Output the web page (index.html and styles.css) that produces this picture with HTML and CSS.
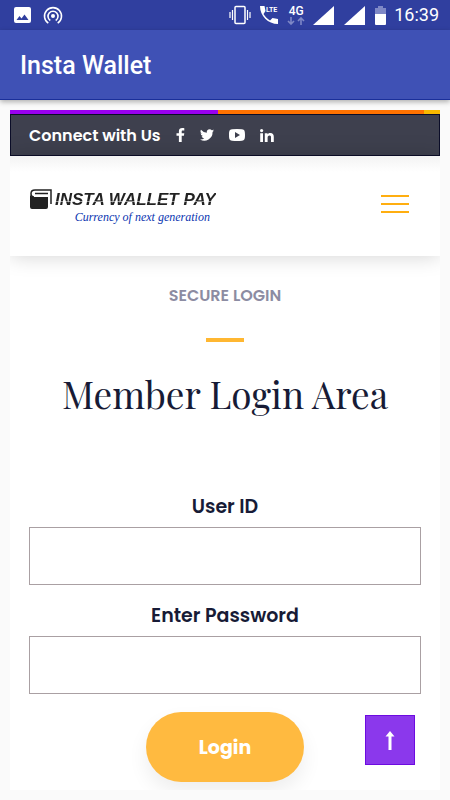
FILE: index.html
```html
<!DOCTYPE html>
<html lang="en">
<head>
    <meta charset="UTF-8">
    <meta name="viewport" content="width=device-width, initial-scale=1.0">
    <title>Insta Wallet</title>
    <link rel="stylesheet" href="styles.css">
</head>
<body>
    <!-- Status bar -->
    <div class="status">
        <div class="status-left">
            <svg width="18" height="18" viewBox="0 0 18 18">
                <path fill="#fff" fill-rule="evenodd" d="M2 1h13a2 2 0 0 1 2 2v12a2 2 0 0 1-2 2H2a2 2 0 0 1-2-2V3a2 2 0 0 1 2-2zM2.500 14h12l-4-5.500-3 4-2-2.500z"/>
            </svg>
            <svg width="20" height="20" viewBox="0 0 20 20" fill="none" stroke="#fff" stroke-width="1.600">
                <circle cx="10" cy="11" r="2" fill="#fff" stroke="none"/>
                <path d="M7.300 15.500a5 5 0 1 1 5.400 0M5.300 18.200a8.500 8.500 0 1 1 9.400 0"/>
            </svg>
        </div>
        <div class="status-right">
            <svg width="22" height="20" viewBox="0 0 22 20" fill="none" stroke="#fff">
                <rect x="6" y="1.500" width="10" height="17" rx="1" stroke-width="1.500"/>
                <path stroke-width="1.200" d="M3.500 5v10M18.500 5v10M1 7v6M21 7v6"/>
            </svg>
            <svg class="call" width="20" height="20" viewBox="0 0 20 20">
                <path fill="#fff" d="M1 1h4.500l1 5L4.500 9c1.500 2.500 3.500 4.800 6.500 6.500l2.500-2.500 5.500 1V19C9 19 1 11 1 1z"/>
                <text x="7" y="7">LTE</text>
            </svg>
            <div class="network">
                <span>4G</span>
                <svg width="18" height="8" viewBox="0 0 18 8" fill="none" stroke="#7f88c6" stroke-width="1.600">
                    <path d="M4 0v6.500M1 4l3 3 3-3M14 8V1.500M11 4l3-3 3 3"/>
                </svg>
            </div>
            <svg class="signal" width="21" height="19" viewBox="0 0 21 19"><path fill="#fff" d="M21 0v19H0z"/></svg>
            <svg class="signal" width="21" height="19" viewBox="0 0 21 19"><path fill="#fff" d="M21 0v19H0z"/></svg>
            <svg width="11" height="19" viewBox="0 0 11 19">
                <path fill="#7f88c6" d="M3 0h5v2h3v6H0V2h3z"/>
                <path fill="#fff" d="M0 8h11v10a1 1 0 0 1-1 1H1a1 1 0 0 1-1-1z"/>
            </svg>
            <span class="time">16:39</span>
        </div>
    </div>

    <!-- App bar -->
    <header class="appbar">Insta Wallet</header>

    <main class="page">
        <div class="stripe"></div>

        <!-- Social links -->
        <div class="topbar">
            <span>Connect with Us</span>
            <a href="#" aria-label="Facebook">
                <svg width="9" height="14" viewBox="0 0 8 14"><path fill="#fff" d="M7.800 0.200v2.300H6.400c-1 0-1.200.5-1.200 1.200v1.500h2.600l-.4 2.600H5.200V14H2.400V7.800H0V5.200h2.400v-2C2.400 1.100 3.700 0 5.700 0c1 0 1.800.1 2.100.2z"/></svg>
            </a>
            <a href="#" aria-label="Twitter">
                <svg width="14" height="12" viewBox="0 0 24 20"><path fill="#fff" d="M24 2.400a10 10 0 0 1-2.800.8A5 5 0 0 0 23.300.5a10 10 0 0 1-3.100 1.200 4.900 4.900 0 0 0-8.400 4.500A14 14 0 0 1 1.700 1a4.900 4.900 0 0 0 1.500 6.600A5 5 0 0 1 1 7a4.900 4.900 0 0 0 3.900 4.900 5 5 0 0 1-2.200.1 4.900 4.900 0 0 0 4.600 3.400A10 10 0 0 1 0 17.500 14 14 0 0 0 21.500 5a10 10 0 0 0 2.500-2.600z"/></svg>
            </a>
            <a href="#" aria-label="YouTube">
                <svg width="16" height="12" viewBox="0 0 16 12"><path fill="#fff" fill-rule="evenodd" d="M3 0.300Q8-.3 13 .3C15.500.5 16 2 16 6s-.5 5.500-3 5.700q-5 .6-10 0C.5 11.500 0 10 0 6S.5.500 3 .3zM6 3v6l5-3z"/></svg>
            </a>
            <a href="#" aria-label="LinkedIn">
                <svg width="14" height="13" viewBox="0 0 14 13" fill="#fff"><circle cx="1.600" cy="1.600" r="1.600"/><path d="M.2 4.300H3V13H.2zM4.800 4.300h2.700v1.200C8 4.700 8.900 4.100 10.300 4.100 13 4.100 13.800 5.800 13.800 8v5H11V8.500c0-1.200-.2-2.100-1.500-2.100-1.400 0-1.900 1-1.900 2.200V13H4.800z"/></svg>
            </a>
        </div>

        <!-- Logo and menu -->
        <div class="navbar">
            <a class="logo" href="#">
                <svg width="22" height="20" viewBox="0 0 22 20">
                    <path fill="#222" d="M0 4c0 3 1.500 4 4 4h14v10a2 2 0 0 1-2 2H2a2 2 0 0 1-2-2z"/>
                    <path fill="#fff" d="M4 2h16v2H5v2.500h12V7H4C1.500 7 1.500 2 4 2z"/>
                    <path fill="none" stroke="#222" stroke-width="1.500" d="M21 15V1H5C2 1 1 2.500 1 4.500S2 8 4 8M18 4.500H5"/>
                </svg>
                <span class="logo-text">
                    <span class="brand">INSTA WALLET PAY</span>
                    <span class="tagline">Currency of next generation</span>
                </span>
            </a>
            <button class="menu" type="button" aria-label="Menu">
                <i></i><i></i><i></i>
            </button>
        </div>

        <!-- Login -->
        <section class="login">
            <h2>SECURE LOGIN</h2>
            <div class="line"></div>
            <h1>Member Login Area</h1>

            <form action="">
                <label for="userid">User ID</label>
                <input type="text" id="userid" name="userid">

                <label for="password">Enter Password</label>
                <input type="password" id="password" name="password">

                <button class="submit">Login</button>
            </form>
        </section>

        <a class="to-top" href="#" aria-label="Back to top">
            <svg width="10" height="19" viewBox="0 0 10 19"><path fill="#fff" d="M5 0l4.500 5.500H6.500V19h-3V5.500H.5z"/></svg>
        </a>
    </main>
</body>
</html>
```
FILE: styles.css
```css
*{
    margin: 0;
    padding: 0;
    box-sizing: border-box;
}

body{
    background: #fafafa;
    font-family: Poppins, Inter, sans-serif;
    color: #171b36;
}

svg{
    display: block;
    flex: none;
}

a{
    text-decoration: none;
}

/* status bar */
.status{
    display: flex;
    justify-content: space-between;
    align-items: center;
    height: 30px;
    padding: 0 11px 0 14px;
    background: #303f9f;
    color: #fff;
    font-family: Roboto, sans-serif;
}

.status-left,
.status-right{
    display: flex;
    align-items: center;
}

.status-left{
    gap: 11px;
}

.status-right{
    gap: 8px;
}

.call text{
    fill: #fff;
    font-size: 7px;
    font-weight: 700;
}

.network span{
    display: block;
    font-size: 12px;
    font-weight: 500;
    line-height: 11px;
    text-align: center;
}

.signal{
    margin-right: 2px;
}

.time{
    font-size: 18px;
    line-height: 30px;
}

/* app bar */
.appbar{
    position: relative;
    padding: 21px 20px 18px;
    background: #3f51b5;
    border-bottom: 1px solid #1a2f9a;
    box-shadow: 0 2px 5px rgba(0, 0, 0, 0.3);
    color: #fff;
    font-family: Roboto, sans-serif;
    font-size: 25px;
    font-weight: 500;
    line-height: 30px;
}

.page{
    position: relative;
    margin: 10px;
    background: #fff;
    overflow: hidden;
}

.stripe{
    height: 4px;
    background: linear-gradient(to right, #9a00f0 48.3%, #ff7200 48.3%, #ff7200 96.3%, #f8b800 96.3%);
}

.topbar{
    display: flex;
    align-items: center;
    gap: 15px;
    height: 42px;
    padding: 0 18px;
    background: #3e404e;
    border: 1px solid #0b0d28;
    color: #fff;
    font-size: 16px;
    font-weight: 600;
}

.navbar{
    display: flex;
    justify-content: space-between;
    height: 100px;
    padding: 33px 31px 0 20px;
    background: linear-gradient(#f3f3f3, #fff 16px);
    box-shadow: 0 0 20px rgba(0, 0, 0, 0.18);
}

.logo{
    display: flex;
    gap: 3px;
}

.logo-text{
    display: flex;
    flex-direction: column;
}

.brand{
    background: linear-gradient(#222 12px, #999 12px, #999 13px, #222 13px);
    background-clip: text;
    -webkit-background-clip: text;
    color: transparent;
    font-family: "Liberation Sans", sans-serif;
    font-size: 17px;
    font-weight: 700;
    font-style: italic;
    line-height: 22px;
}

.tagline{
    align-self: flex-end;
    padding-right: 6px;
    color: #0a35b0;
    font-family: "Liberation Serif", serif;
    font-size: 12px;
    font-style: italic;
    line-height: 12px;
}

.menu{
    display: flex;
    flex-direction: column;
    gap: 6px;
    height: 18px;
    margin-top: 6px;
    background: none;
    border: none;
}

.menu i{
    width: 28px;
    height: 2px;
    background: #ffae10;
}

/* login */
.login{
    padding: 30px 19px 8px;
    text-align: center;
}

.login h2{
    color: #8c8ca2;
    font-size: 16px;
    font-weight: 600;
    line-height: 20px;
}

.line{
    width: 38px;
    height: 4px;
    margin: 32px auto 26px;
    background: #ffb731;
}

.login h1{
    font-family: "Playfair Display", "Liberation Serif", serif;
    font-size: 37px;
    font-weight: 400;
    line-height: 52px;
    margin-bottom: 72px;
}

.login label{
    display: block;
    font-size: 19px;
    font-weight: 600;
    line-height: 30px;
    margin-bottom: 5px;
}

.login input{
    display: block;
    width: 100%;
    height: 58px;
    margin-bottom: 16px;
    padding: 0 16px;
    border: 1px solid #aaa0a3;
    background: #fff;
    font-size: 19px;
}

.submit{
    width: 158px;
    height: 70px;
    margin-top: 2px;
    border: none;
    border-radius: 35px;
    background: #ffba40;
    box-shadow: 0 10px 20px rgba(0, 0, 0, 0.07);
    color: #fff;
    font-family: inherit;
    font-size: 19px;
    font-weight: 700;
}

.to-top{
    position: absolute;
    right: 25px;
    bottom: 25px;
    display: flex;
    justify-content: center;
    align-items: center;
    width: 50px;
    height: 50px;
    background: #8b38ec;
    border: 1px solid #6d0be0;
}
```
